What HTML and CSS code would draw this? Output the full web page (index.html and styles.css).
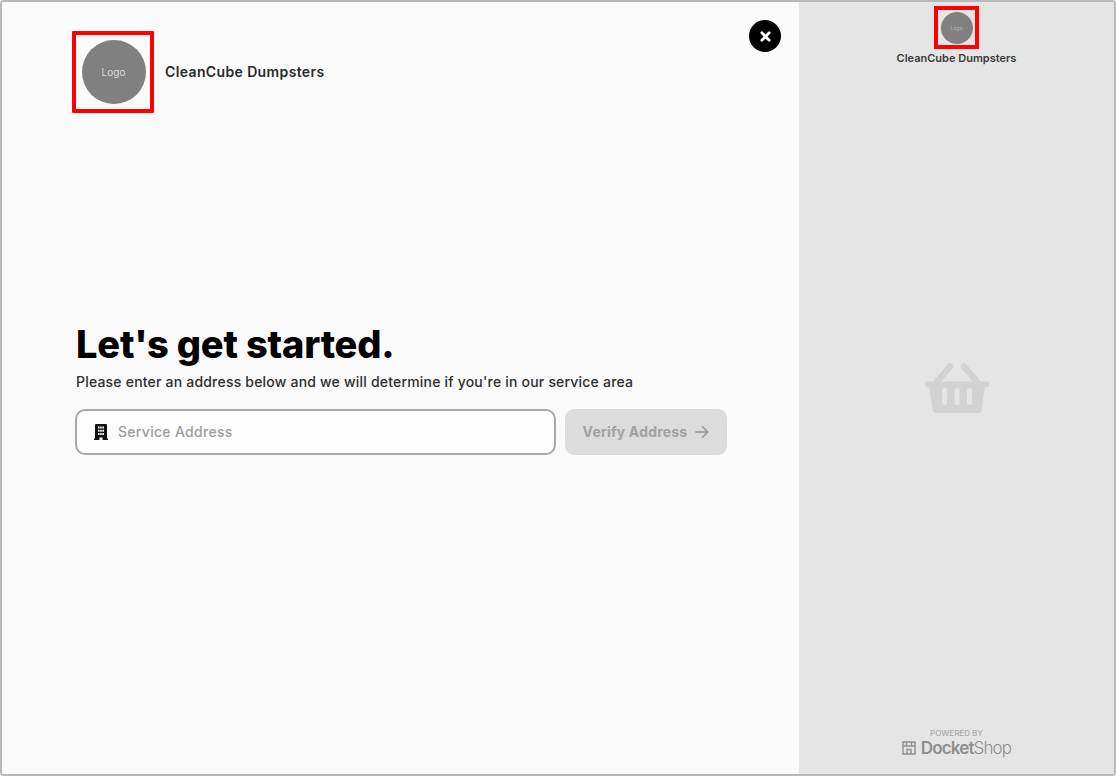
FILE: index.html
```html
<!DOCTYPE html>
<html lang="en">
<head>
<meta charset="utf-8">
<title>CleanCube Dumpsters</title>
<link rel="stylesheet" href="styles.css">
</head>
<body>
<div class="window">
  <section class="main">
    <header class="brand">
      <div class="logo-frame">
        <div class="logo">Logo</div>
      </div>
      <span class="brand-name">CleanCube Dumpsters</span>
    </header>
    <div class="intro">
      <h1 class="title">Let's get started.</h1>
      <p class="subtitle">Please enter an address below and we will determine if you're in our service area</p>
      <form class="address-form">
        <label class="address-field">
          <svg class="building-icon" viewBox="0 0 14 16" width="14" height="16" aria-hidden="true">
            <path fill="#111" fill-rule="evenodd" d="M2 0h10a1 1 0 0 1 1 1v13.500h1V16H8.600v-2.600H5.400V16H0v-1.500h1V1a1 1 0 0 1 1-1zM4 2.500v2h1.600v-2zM6.200 2.500v2h1.600v-2zM8.400 2.500v2H10v-2zM4 5.800v2h1.600v-2zM6.200 5.800v2h1.600v-2zM8.400 5.800v2H10v-2zM4 9.100v2h1.600v-2zM6.200 9.100v2h1.600v-2zM8.400 9.100v2H10v-2z"/>
          </svg>
          <span class="placeholder">Service Address</span>
        </label>
        <button class="verify" type="button" disabled>
          Verify Address
          <svg class="arrow" viewBox="0 0 14 14" width="14" height="14" aria-hidden="true">
            <path d="M1 7h11.500M7.500 1.800 12.700 7l-5.200 5.200" fill="none" stroke="currentColor" stroke-width="1.800" stroke-linecap="round" stroke-linejoin="round"/>
          </svg>
        </button>
      </form>
    </div>
    <button class="close" type="button" aria-label="Close">
      <svg viewBox="0 0 12 12" width="11" height="11" aria-hidden="true">
        <path d="M2 2l8 8M10 2l-8 8" stroke="#fff" stroke-width="3" stroke-linecap="round"/>
      </svg>
    </button>
  </section>
  <aside class="cart">
    <div class="cart-brand">
      <div class="mini-frame">
        <div class="mini-logo">Logo</div>
      </div>
      <span class="mini-name">CleanCube Dumpsters</span>
    </div>
    <div class="cart-empty">
      <svg viewBox="0 0 64 50" width="64" height="50" aria-hidden="true">
        <path d="M11 20 25 3.500M53 20 39 3.500" fill="none" stroke="#d2d2d2" stroke-width="6.500" stroke-linecap="round"/>
        <path fill="#d2d2d2" fill-rule="evenodd" d="M2.500 18.500h59a2.700 2.700 0 0 1 0 5.500H60l-3.500 22.500A4 4 0 0 1 52.500 50h-41a4 4 0 0 1-4-3.500L4 24H2.500a2.700 2.700 0 0 1 0-5.500zM19.500 25a2.500 2.500 0 0 0-2.500 2.500v12a2.500 2.500 0 0 0 5 0v-12a2.500 2.500 0 0 0-2.500-2.500zM32 25a2.500 2.500 0 0 0-2.500 2.500v12a2.500 2.500 0 0 0 5 0v-12A2.500 2.500 0 0 0 32 25zM44.500 25a2.500 2.500 0 0 0-2.500 2.500v12a2.500 2.500 0 0 0 5 0v-12a2.500 2.500 0 0 0-2.500-2.500z"/>
      </svg>
    </div>
    <div class="powered">
      <span class="powered-label">POWERED BY</span>
      <span class="powered-brand">
        <svg viewBox="0 0 14 14" width="14" height="14" aria-hidden="true">
          <path fill="none" stroke="#8f8f8f" stroke-width="1.400" d="M1 1h12v12H1zM1 5h12M4.500 1v4M9.500 1v4M5 13V8.500h4V13"/>
        </svg>
        <span class="wordmark"><b>Docket</b>Shop</span>
      </span>
    </div>
  </aside>
</div>
</body>
</html>
```
FILE: styles.css
```css
* {
  box-sizing: border-box;
}

html,
body {
  margin: 0;
  height: 100%;
}

body {
  font-family: Inter, "Liberation Sans", sans-serif;
  background: #fff;
}

.window {
  display: flex;
  height: 776px;
  border: 2px solid #b8b8b8;
  border-radius: 4px;
  overflow: hidden;
}

.main {
  position: relative;
  flex: 0 0 797px;
  display: grid;
  grid-template-rows: 1fr auto 1fr;
  background: #fafafa;
  padding: 0 71px 0 74px;
}

.brand {
  display: flex;
  align-items: flex-start;
  gap: 11px;
  padding-top: 29px;
  margin-left: -4px;
}

.logo-frame {
  width: 82px;
  height: 82px;
  padding-left: 1px;
  border: 4px solid #fe0000;
  display: flex;
  align-items: center;
  justify-content: center;
  border-radius: 1px;
}

.logo {
  flex: none;
  width: 64px;
  height: 64px;
  border-radius: 50%;
  background: #808080;
  color: #dcdcdc;
  font-size: 10px;
  display: flex;
  align-items: center;
  justify-content: center;
}

.brand-name {
  margin-top: 32px;
  font-size: 14px;
  line-height: 17px;
  font-weight: 600;
  letter-spacing: 0.37px;
  color: #2a2a2a;
}

.intro {
  grid-row: 2;
}

.title {
  margin: 0;
  font-size: 38px;
  line-height: 44px;
  font-weight: 800;
  letter-spacing: -0.2px;
  color: #000;
}

.subtitle {
  margin: 6px 0 17px;
  font-size: 14px;
  line-height: 20px;
  font-weight: 500;
  letter-spacing: 0.2px;
  color: #2e2e2e;
}

.address-form {
  display: flex;
  gap: 9px;
  margin-left: -1px;
}

.address-field {
  flex: 0 0 481px;
  height: 46px;
  display: flex;
  align-items: center;
  gap: 10px;
  padding-left: 17px;
  border: 2px solid #a8a8a8;
  border-radius: 10px;
  background: #fdfdfd;
}

.placeholder {
  font-size: 14px;
  font-weight: 500;
  letter-spacing: 0.3px;
  color: #9c9c9c;
}

.verify {
  flex: 0 0 162px;
  height: 46px;
  display: flex;
  align-items: center;
  justify-content: center;
  gap: 8px;
  border: 0;
  border-radius: 9px;
  background: #dcdcdc;
  font: 700 14px Inter, "Liberation Sans", sans-serif;
  letter-spacing: 0.2px;
  color: #a2a2a2;
}

.close {
  position: absolute;
  top: 18px;
  left: 747px;
  width: 32px;
  height: 32px;
  display: flex;
  align-items: center;
  justify-content: center;
  padding: 0;
  border: 0;
  border-radius: 50%;
  background: #000;
}

.cart {
  flex: 1;
  display: flex;
  flex-direction: column;
  align-items: center;
  background: #e5e5e5;
}

.cart-brand {
  display: flex;
  flex-direction: column;
  align-items: center;
  padding-top: 4px;
  gap: 2px;
}

.mini-frame {
  width: 45px;
  height: 43px;
  border: 4px solid #fe0000;
  display: flex;
  align-items: center;
  justify-content: center;
}

.mini-logo {
  flex: none;
  width: 32px;
  height: 32px;
  border-radius: 50%;
  background: #808080;
  color: #b8b8b8;
  font-size: 5px;
  display: flex;
  align-items: center;
  justify-content: center;
}

.mini-name {
  font-size: 11px;
  line-height: 14px;
  font-weight: 600;
  color: #3a3a3a;
}

.cart-empty {
  flex: 1;
  display: flex;
  align-items: flex-start;
  padding-top: 298px;
}

.powered {
  display: flex;
  flex-direction: column;
  align-items: center;
  padding-bottom: 16px;
}

.powered-label {
  font-size: 8px;
  line-height: 9px;
  font-weight: 500;
  color: #a9a9a9;
}

.powered-brand {
  display: flex;
  align-items: center;
  gap: 5px;
}

.wordmark {
  font-family: Inter, sans-serif;
  font-size: 17px;
  line-height: 20px;
  font-weight: 300;
  letter-spacing: -0.85px;
  color: #8f8f8f;
}

.wordmark b {
  font-weight: 600;
}
```
